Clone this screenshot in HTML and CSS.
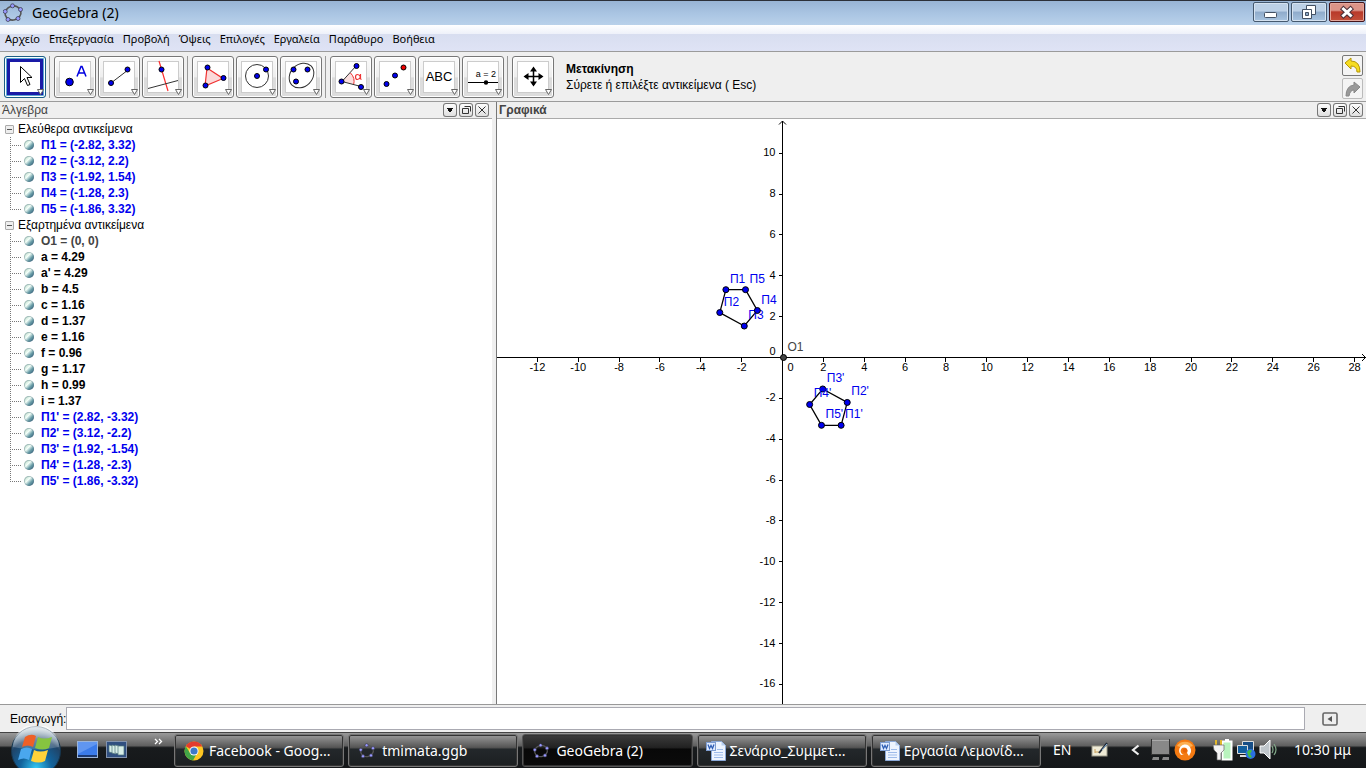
FILE: index.html
```html
<!DOCTYPE html>
<html lang="el">
<head>
<meta charset="utf-8">
<title>GeoGebra (2)</title>
<link rel="stylesheet" href="styles.css">
</head>
<body>
<svg class="defs" width="0" height="0" aria-hidden="true">
  <defs>
    <symbol id="ggb" viewBox="0 0 20 20">
      <ellipse cx="10" cy="10" rx="8" ry="7" fill="none" stroke="#555" stroke-width="1.6" transform="rotate(-15 10 10)"/>
      <g fill="#9999ff" stroke="#334" stroke-width=".7"><circle cx="9.500" cy="2.800" r="2"/><circle cx="17.500" cy="6.500" r="2"/><circle cx="15" cy="15.500" r="2"/><circle cx="5" cy="16.500" r="2"/><circle cx="2.200" cy="8.500" r="2"/></g>
    </symbol>
    <symbol id="down" viewBox="0 0 14 14"><path d="M4 5h6v1H9v2H8v1H6V8H5V6H4z" fill="#111"/></symbol>
    <symbol id="window" viewBox="0 0 14 14"><path d="M3.500 5.500h6v5h-6zM5.500 3.500h6v5" fill="none" stroke="#333"/></symbol>
    <symbol id="close" viewBox="0 0 14 14"><path d="M3.500 3.500l7 7M10.500 3.500l-7 7" stroke="#333"/></symbol>
    <symbol id="word" viewBox="0 0 22 22">
      <path d="M6.500 1.500h10l4 4v15h-14z" fill="#edf4ff" stroke="#8ba9d8"/><path d="M16.500 1.500v4h4" fill="#b8cff0"/><path d="M9 12.500h9M9 15h9M9 17.500h9M12 9.500h6" stroke="#9dbbea"/>
      <rect x="1.500" y="2.500" width="9" height="8" fill="#dfeaff" stroke="#7e9dd0"/><path d="M3 4.500l1.500 4L6 5.500l1.500 3L9 4.500" fill="none" stroke="#2f5fb5" stroke-width="1.300"/>
    </symbol>
  </defs>
</svg>
<div class="app">
  <header class="titlebar">
    <svg class="title-icon" width="20" height="20"><use href="#ggb"/></svg>
    <h1 class="title">GeoGebra (2)</h1>
    <div class="win-buttons">
      <button class="win" aria-label="Ελαχιστοποίηση"><svg width="34" height="18"><rect x="10.500" y="9.500" width="12" height="5" rx="1" fill="#fff" stroke="#435063"/></svg></button>
      <button class="win" aria-label="Επαναφορά"><svg width="34" height="18"><g fill="#fff" stroke="#435063"><path d="M14.500 2.500h9v9h-9z"/><path d="M10.500 6.500h9v9h-9z"/><path d="M13.500 9.500h3v3h-3z" fill="#8eaac8"/></g></svg></button>
      <button class="win win-close" aria-label="Κλείσιμο"><svg width="34" height="18"><path d="M13.500 6l7 6.500M20.500 6l-7 6.500" stroke="#4c3038" stroke-width="5" stroke-linecap="square"/><path d="M13.500 6l7 6.500M20.500 6l-7 6.500" stroke="#fff" stroke-width="3" stroke-linecap="square"/></svg></button>
    </div>
  </header>
  <nav class="menubar">
    <button>Αρχείο</button><button>Επεξεργασία</button><button>Προβολή</button><button>Όψεις</button><button>Επιλογές</button><button>Εργαλεία</button><button>Παράθυρο</button><button>Βοήθεια</button>
  </nav>
  <div class="toolbar">
    <div class="group">
      <button class="tool selected" aria-label="Μετακίνηση"><svg viewBox="0 0 40 40"><path d="M15.500 9.500v16l4-4 3 7 2.500-1-3-7h5z" fill="#fff" stroke="#000"/><path class="drop" d="M32.500 32.500h6l-3 5z"/></svg></button>
    </div>
    <div class="group">
      <button class="tool" aria-label="Νέο σημείο"><svg viewBox="0 0 40 40"><circle class="pt" cx="14.500" cy="25" r="3.800"/><path d="M22 19.500l4-10h1l4 10M23.500 16h6" fill="none" stroke="#0000e0" stroke-width="1.500"/><path class="drop" d="M32.500 32.500h6l-3 5z"/></svg></button>
      <button class="tool" aria-label="Ευθεία"><svg viewBox="0 0 40 40"><path class="ln" d="M12 26l17-13"/><circle class="pt" cx="12" cy="26" r="2.500"/><circle class="pt" cx="28.500" cy="12.500" r="2.500"/><path class="drop" d="M32.500 32.500h6l-3 5z"/></svg></button>
      <button class="tool" aria-label="Κάθετη ευθεία"><svg viewBox="0 0 40 40"><path d="M16 4l9 30" stroke="#ff3030" stroke-width="1.200"/><path class="ln" d="M5 31.500l30-8"/><circle class="pt" cx="18.500" cy="12.500" r="2.500"/><path class="drop" d="M32.500 32.500h6l-3 5z"/></svg></button>
    </div>
    <div class="group">
      <button class="tool" aria-label="Πολύγωνο"><svg viewBox="0 0 40 40"><path d="M14 11l16 10.500L12 29z" fill="#fbdada" stroke="#f03030" stroke-width="1.200"/><circle class="pt" cx="14.500" cy="10.500" r="2.500"/><circle class="pt" cx="30.500" cy="21" r="2.500"/><circle class="pt" cx="12.500" cy="28.500" r="2.500"/><path class="drop" d="M32.500 32.500h6l-3 5z"/></svg></button>
      <button class="tool" aria-label="Κύκλος"><svg viewBox="0 0 40 40"><circle class="ln" cx="20" cy="19" r="11.500"/><circle class="pt" cx="20" cy="19" r="2.500"/><circle class="pt" cx="29" cy="12.500" r="2.500"/><path class="drop" d="M32.500 32.500h6l-3 5z"/></svg></button>
      <button class="tool" aria-label="Έλλειψη"><svg viewBox="0 0 40 40"><ellipse class="ln" cx="20.500" cy="18.500" rx="13.500" ry="11" transform="rotate(-45 20.500 18.500)"/><circle class="pt" cx="12.500" cy="12.500" r="2.500"/><circle class="pt" cx="26.500" cy="12.500" r="2.500"/><circle class="pt" cx="15" cy="24.500" r="2.500"/><path class="drop" d="M32.500 32.500h6l-3 5z"/></svg></button>
    </div>
    <div class="group">
      <button class="tool" aria-label="Γωνία"><svg viewBox="0 0 40 40"><path d="M11 24.500l8.500-9a12 12 0 0 1 3 12z" fill="#fbdede"/><path d="M19.500 16a12 12 0 0 1 3 12" fill="none" stroke="#e33"/><path class="ln" d="M25 9L11 24.500l19 5"/><path d="M29.500 17v4q0 1.500 1 1.500M29.500 20q-1 2.500-3 2.500t-2-2.500 2-2.500 3 2.500" fill="none" stroke="#e33" stroke-width="1.200"/><circle class="pt" cx="25.500" cy="9" r="2.500"/><circle class="pt" cx="10.500" cy="24.500" r="2.500"/><circle class="pt" cx="30" cy="30" r="2.500"/><path class="drop" d="M32.500 32.500h6l-3 5z"/></svg></button>
      <button class="tool" aria-label="Ανάκλαση"><svg viewBox="0 0 40 40"><circle class="pt" cx="11.500" cy="27" r="2.500"/><circle class="pt" cx="20" cy="18.500" r="2.500"/><circle class="pt red" cx="28.500" cy="10.500" r="2.500"/><path class="drop" d="M32.500 32.500h6l-3 5z"/></svg></button>
      <button class="tool" aria-label="Εισαγωγή κειμένου"><svg viewBox="0 0 40 40"><text x="20" y="24" text-anchor="middle" font-size="13">ABC</text><path class="drop" d="M32.500 32.500h6l-3 5z"/></svg></button>
      <button class="tool" aria-label="Δρομέας"><svg viewBox="0 0 40 40"><text x="23" y="20" text-anchor="middle" font-size="9">a = 2</text><path d="M5 25.500h30" stroke="#000"/><circle cx="23" cy="25.500" r="2.200"/><path class="drop" d="M32.500 32.500h6l-3 5z"/></svg></button>
    </div>
    <div class="group">
      <button class="tool" aria-label="Μετακίνηση γραφικών"><svg viewBox="0 0 40 40"><path d="M20.500 12v16M12 19.500h17" stroke="#000" stroke-width="1.500"/><path d="M20.500 9.500l3.500 5h-7zM20.500 29.500l3.500-5h-7zM10.500 19.500l5-3.500v7zM30.500 19.500l-5-3.500v7z"/><path class="drop" d="M32.500 32.500h6l-3 5z"/></svg></button>
    </div>
    <div class="hint"><strong>Μετακίνηση</strong><span>Σύρετε ή επιλέξτε αντικείμενα ( Esc)</span></div>
    <div class="history">
      <button aria-label="Αναίρεση"><svg width="19" height="19"><path d="M2 7l6-5v3q9 0 9 11h-3q0-6-6-6v3z" fill="#f6dc20" stroke="#b59605"/></svg></button>
      <button disabled aria-label="Ακύρωση αναίρεσης"><svg width="19" height="19"><path d="M17 8l-6-5v3q-8 1-8 11h3q1-6 5-6v3z" fill="#999" stroke="#888"/></svg></button>
    </div>
  </div>
  <main class="views">
    <section class="view algebra">
      <div class="view-head"><h2>Άλγεβρα</h2><div class="view-buttons"><button aria-label="Μενού"><svg width="14" height="14"><use href="#down"/></svg></button><button aria-label="Νέο παράθυρο"><svg width="14" height="14"><use href="#window"/></svg></button><button aria-label="Κλείσιμο άλγεβρας"><svg width="14" height="14"><use href="#close"/></svg></button></div></div>
      <div class="tree">
        <div class="branch"><button class="fold" aria-label="Σύμπτυξη"></button>Ελεύθερα αντικείμενα</div>
        <ul class="leaves">
          <li class="blue">Π1 = (-2.82, 3.32)</li><li class="blue">Π2 = (-3.12, 2.2)</li><li class="blue">Π3 = (-1.92, 1.54)</li><li class="blue">Π4 = (-1.28, 2.3)</li><li class="blue">Π5 = (-1.86, 3.32)</li>
        </ul>
        <div class="branch"><button class="fold" aria-label="Σύμπτυξη"></button>Εξαρτημένα αντικείμενα</div>
        <ul class="leaves">
          <li class="gray">Ο1 = (0, 0)</li><li>a = 4.29</li><li>a' = 4.29</li><li>b = 4.5</li><li>c = 1.16</li><li>d = 1.37</li><li>e = 1.16</li><li>f = 0.96</li><li>g = 1.17</li><li>h = 0.99</li><li>i = 1.37</li>
          <li class="blue">Π1' = (2.82, -3.32)</li><li class="blue">Π2' = (3.12, -2.2)</li><li class="blue">Π3' = (1.92, -1.54)</li><li class="blue">Π4' = (1.28, -2.3)</li><li class="blue">Π5' = (1.86, -3.32)</li>
        </ul>
      </div>
    </section>
    <section class="view graphics">
      <div class="view-head"><h2 class="strong">Γραφικά</h2><div class="view-buttons"><button aria-label="Μενού"><svg width="14" height="14"><use href="#down"/></svg></button><button aria-label="Νέο παράθυρο"><svg width="14" height="14"><use href="#window"/></svg></button><button aria-label="Κλείσιμο γραφικών"><svg width="14" height="14"><use href="#close"/></svg></button></div></div>
      <div class="canvas"><svg id="plot" class="plot"></svg></div>
    </section>
  </main>
  <form class="inputbar">
    <label for="cmd">Εισαγωγή:</label><input id="cmd" type="text" autocomplete="off">
    <button type="button" class="help" aria-label="Βοήθεια εισαγωγής"><svg width="16" height="14"><rect x="1" y="1" width="14" height="12" rx="1.500" fill="#eee" stroke="#666" stroke-width="1.600"/><path d="M10 4v6L5.500 7z" fill="#555"/></svg></button>
  </form>
  <footer class="taskbar">
    <button class="start" aria-label="Έναρξη"><svg width="52" height="42" viewBox="0 0 52 42">
      <defs><radialGradient id="orb" cx=".5" cy=".85" r=".8"><stop offset="0" stop-color="#35c9f5"/><stop offset=".4" stop-color="#12639c"/><stop offset=".75" stop-color="#204468"/><stop offset="1" stop-color="#9fb5c4"/></radialGradient>
      <linearGradient id="shine" x2="0" y2="1"><stop offset="0" stop-color="#fff" stop-opacity=".75"/><stop offset="1" stop-color="#fff" stop-opacity=".15"/></linearGradient></defs>
      <circle cx="26" cy="25" r="24.500" fill="url(#orb)" stroke="#163750"/><path d="M3 21A23 23 0 0 1 49 21Q26 26 3 21z" fill="url(#shine)"/>
      <path d="M15 11q6-4 11-1l-3 11q-5-3-11 0z" fill="#ee6027"/><path d="M28 11q6 3 14 0l-3 11q-6 3-14 0z" fill="#86c440"/><path d="M11 23q6-3 11 0l-3 11q-5-3-11 0z" fill="#4aa7ee"/><path d="M24 24q6 3 14 0l-3 11q-6 3-14 0z" fill="#ffd23a"/></svg></button>
    <div class="quick">
      <button aria-label="Επιφάνεια εργασίας"><svg width="21" height="17"><rect x=".5" y=".5" width="20" height="16" fill="#3b7bea" stroke="#9bb4d8"/><path d="M1 13L20 3V1H1z" fill="#79a9f5" opacity=".6"/><path d="M1 14h19v2H1z" fill="#1b3973"/></svg></button>
      <button aria-label="Εναλλαγή παραθύρων"><svg width="21" height="17"><rect x=".5" y=".5" width="20" height="16" fill="#304f80" stroke="#8393ad"/><g fill="#d8eee8" stroke="#52777c" stroke-width=".7"><path d="M3 4l4 1v7l-4-1z"/><path d="M6 4l4 1v8l-4-1z"/><path d="M9 4l4 1v8l-4-1z"/><path d="M12 5h6v9h-6z"/></g></svg></button>
    </div>
    <button class="more" aria-label="Περισσότερα"><svg width="9" height="7"><path d="M1 1l2.500 2.500L1 6M5 1l2.500 2.500L5 6" fill="none" stroke="#fff" stroke-width="1.300"/></svg></button>
    <div class="tasks">
      <button class="task"><svg width="20" height="20" viewBox="0 0 20 20"><circle cx="10" cy="10" r="9.500" fill="#fdc622"/><path d="M10 10L1.800 5.200A9.500 9.500 0 0 1 18.300 5.500H10z" fill="#e33b2e"/><path d="M1.800 5.200A9.500 9.500 0 0 0 9 19.500l4-7.200L10 10 6 12z" fill="#42a647"/><circle cx="10" cy="10" r="4.500" fill="#fff"/><circle cx="10" cy="10" r="3.600" fill="#3c79c9"/></svg><span>Facebook - Goog...</span></button>
      <button class="task ggb"><svg width="16" height="16"><use href="#ggb"/></svg><span>tmimata.ggb</span></button>
      <button class="task ggb active"><svg width="16" height="16"><use href="#ggb"/></svg><span>GeoGebra (2)</span></button>
      <button class="task doc"><svg width="22" height="22"><use href="#word"/></svg><span>Σενάριο_Συμμετ...</span></button>
      <button class="task doc"><svg width="22" height="22"><use href="#word"/></svg><span>Εργασία Λεμονίδ...</span></button>
    </div>
    <div class="tray">
      <span class="lang">EN</span>
      <svg class="pen" width="18" height="16"><rect x="1" y="4" width="15" height="10" fill="#efebd6" stroke="#9c9a8a"/><path d="M4 7v4M4 10h4" stroke="#c8a05c"/><path d="M8 11l8-10" stroke="#202a38" stroke-width="2"/><path d="M11 8l5-6" stroke="#8bb7df"/></svg>
      <svg class="chevron" width="10" height="12"><path d="M8.500 1.500L3 6l5.500 4.500" fill="none" stroke="#eee" stroke-width="2.200"/></svg>
      <svg class="net-off" width="20" height="22"><rect x=".5" y=".5" width="18" height="15" fill="#888" stroke="#333"/><path d="M1 1h17" stroke="#ccc"/><path d="M2 18h6v3H1zM12 18h6v3h-7z" fill="#888"/></svg>
      <svg class="avast" width="22" height="22"><circle cx="11" cy="11" r="10.500" fill="#f47a12"/><path d="M3 7a9 8 0 0 1 16 0q-8 3-16 0z" fill="#ffc66e" opacity=".7"/><path d="M7 16a6 6 0 1 1 9-1l-1 2-2-3a3.500 3.500 0 1 0-3 1.500z" fill="#fff"/><circle cx="11" cy="11.500" r="2.200" fill="#e96508"/></svg>
      <svg class="power" width="20" height="22"><rect x="9.500" y="2.500" width="9" height="18" fill="#b8f3bd" stroke="#fff" stroke-width="2"/><path d="M12 0h4v2h-4z" fill="#fff"/><path d="M3 1v5M8 1v5" stroke="#e3b92c" stroke-width="2"/><path d="M0 6h11v5l-3 3v7H4v-7l-3-3z" fill="#f4f4f4" stroke="#666" stroke-width=".7"/></svg>
      <svg class="network" width="20" height="20"><g stroke="#ddd"><path d="M6.500 1.500h11v9h-11z" fill="#174e87"/><path d="M1.500 5.500h10v8h-10z" fill="#135f9e"/></g><path d="M4 16h7" stroke="#ddd" stroke-width="2"/><circle cx="14.500" cy="14" r="5" fill="#2b6fe0"/><path d="M11 12q3-4 5-1l-2 3 2 3q-3 2-4-2z" fill="#42bd4a"/></svg>
      <svg class="volume" width="19" height="20"><path d="M1 6h4l6-6v19l-6-6H1z" fill="#bfc6cb" stroke="#fff"/><path d="M13 6q2 4 0 7M15 4q4 6 0 11" fill="none" stroke="#83a98a" stroke-width="1.200"/></svg>
      <time>10:30 μμ</time>
    </div>
  </footer>
</div>
<script src="plot.js"></script>
</body>
</html>
```
FILE: styles.css
```css
* { box-sizing: border-box; }
body { margin: 0; font-family: "Liberation Sans", sans-serif; font-size: 12px; color: #000; background: #efefef; }
button { font: inherit; color: inherit; padding: 0; margin: 0; border: 0; background: none; }
svg { display: block; }
.defs { position: absolute; }
.app { display: flex; flex-direction: column; height: 100vh; overflow: hidden; }

.titlebar { display: flex; align-items: center; flex: none; height: 25px; padding-left: 3px; border-top: 1px solid #2c3038; background: linear-gradient(#98b4d4, #a9c4e2 50%, #b9d1ea); }
.title { flex: 1; margin: 0 0 0 9px; font: 14px/24px "Noto Sans", sans-serif; }
.win-buttons { display: flex; gap: 2px; align-self: flex-start; padding: 1px 1px 0 0; }
.win { display: grid; place-items: center; width: 36px; height: 20px; border: 1px solid #45596f; border-radius: 2px; background: linear-gradient(#bcd0e6 45%, #8fabcb 50%, #a8c4e0); box-shadow: inset 0 0 0 1px #d5e2f0; }
.win-close { border-color: #43141a; background: linear-gradient(#dc9488 40%, #b8392a 50%, #c4503a); box-shadow: inset 0 0 0 1px #e3a79c; }

.menubar { display: flex; flex: none; align-items: center; gap: 9px; height: 27px; padding: 0 5px; border-bottom: 1px solid #9b9b9b; background: linear-gradient(#fff, #eef1fa 34%, #d8def0 36%, #dfe3f5); font-family: "Noto Sans", sans-serif; font-size: 11px; }

.toolbar { display: flex; flex: none; align-items: center; height: 50px; padding: 0 3px 0 4px; border-bottom: 1px solid #9b9b9b; }
.group { display: flex; gap: 2px; padding-right: 3px; margin-right: 4px; border-right: 1px solid #999; }
.group:nth-child(5) { border: 0; }
.tool { width: 42px; height: 42px; border: 1px solid #777; border-radius: 3px; background: linear-gradient(#fafafa, #eee 50%, #dcdcdc 52%, #ddd); box-shadow: inset 0 0 0 1px #fff; }
.tool svg { width: 40px; height: 40px; background: linear-gradient(#fff, #fff) 50% 50% / 30px 30px no-repeat, linear-gradient(#ccc, #ccc) 50% 50% / 32px 32px no-repeat; }
.tool.selected { border-color: #1d5f85; background: #5aa5d2; }
.tool.selected svg { background: linear-gradient(#fff, #fff) 50% 50% / 30px 30px no-repeat, linear-gradient(#1a1aa6, #1a1aa6) 50% 50% / 36px 36px no-repeat; }
.pt { fill: #00e; stroke: #000; stroke-width: 1; }
.red { fill: #e00; }
.ln { fill: none; stroke: #333; stroke-width: 1; }
.drop { fill: #fff; stroke: #666; stroke-width: 1; }
.hint { display: flex; flex: 1; flex-direction: column; padding-left: 5px; line-height: 16px; }
.hint strong { font-size: 12px; }
.history { display: flex; flex-direction: column; gap: 2px; }
.history button { width: 21px; height: 21px; border: 1px solid #777; border-radius: 2px; background: #f4f4f4; }
.history button:disabled { border-color: #bbb; }

.views { display: flex; flex: 1; min-height: 0; }
.view { display: flex; flex-direction: column; min-width: 0; background: #fff; }
.algebra { flex: 0 0 496px; border-right: 4px solid #efefef; }
.graphics { flex: 1; border-left: 1px solid #777; }
.view-head { display: flex; flex: none; justify-content: space-between; align-items: center; height: 17px; padding: 0 3px 0 2px; border-bottom: 1px solid #aaa; background: #efefef; }
.view-head h2 { margin: 0; font-size: 12px; line-height: 16px; font-weight: normal; color: #444; }
.view-head .strong { font-weight: bold; }
.view-buttons { display: flex; gap: 2px; }
.view-buttons button { width: 14px; height: 14px; border-radius: 3px; background: linear-gradient(#fff, #ddd); box-shadow: inset 0 0 0 1px #777; }
.tree { padding-top: 2px; line-height: 16px; }
.branch { display: flex; align-items: center; gap: 4px; height: 16px; padding-left: 5px; }
.fold { width: 9px; height: 9px; border: 1px solid #aaa; border-radius: 1px; background: linear-gradient(#555, #555) 50% 50% / 5px 1px no-repeat, #eee; }
.leaves { margin: 0; padding: 0; list-style: none; font-weight: bold; }
.leaves li { position: relative; height: 16px; padding-left: 41px; background: repeating-linear-gradient(#777 0 1px, transparent 1px 2px) 10px 0 / 1px 16px no-repeat; }
.leaves li:last-child { background-size: 1px 9px; }
.leaves li::before { content: ""; position: absolute; left: 12px; top: 8px; width: 10px; height: 1px; background: repeating-linear-gradient(90deg, #777 0 1px, transparent 1px 2px); }
.leaves li::after { content: ""; position: absolute; left: 24px; top: 3px; width: 10px; height: 10px; border-radius: 50%; background: linear-gradient(135deg, #a9cdbc, #f3fff8 40%, #6b9ea8 65%, #234e72); box-shadow: inset 0 0 0 1px #4f748066; }
.blue { color: #00e; }
.gray { color: #444; }
.canvas { flex: 1; min-height: 0; overflow: hidden; }
.plot { width: 100%; height: 100%; }
.axis { fill: none; stroke: #000; shape-rendering: crispEdges; }
.arrow { fill: none; stroke: #000; }
.tick-label { font-size: 11px; }
.side { fill: none; stroke: #000; stroke-width: 1.3px; }
.name { font-size: 12px; fill: #00e; }
.origin { fill: #444; }

.inputbar { display: flex; flex: none; align-items: center; height: 28px; padding-left: 10px; border-top: 1px solid #999; }
.inputbar input { flex: 1; height: 23px; border: 1px solid #aaaab2; background: #fff; font: inherit; }
.help { display: grid; place-items: center; width: 50px; margin-right: 11px; }

.taskbar { position: relative; display: flex; flex: none; align-items: flex-start; height: 36px; border-top: 1px solid #444; background: linear-gradient(#999, #606060 36%, #181b1d 42%, #151719); color: #fff; font-family: "Noto Sans", sans-serif; font-size: 14px; }
.start { position: absolute; left: 10px; bottom: 0; }
.quick { display: flex; gap: 8px; padding: 8px 0 0 77px; }
.more { margin: 5px 0 0 27px; }
.tasks { display: grid; grid-template-columns: repeat(5, minmax(0, 1fr)); flex: 0 1 867px; gap: 4px; margin-left: 11px; padding-top: 1px; min-width: 0; }
.task { display: flex; align-items: center; gap: 5px; min-width: 0; height: 33px; padding-left: 9px; border: 1px solid #777; border-radius: 3px; background: linear-gradient(#999, #555 40%, #23282b 46%, #1c1f21); box-shadow: inset 0 0 0 1px #333; white-space: nowrap; }
.task svg { flex: none; }
.ggb { padding-left: 10px; gap: 7px; }
.doc { padding-left: 7px; gap: 3px; }
.active { border-color: #555; background: linear-gradient(#3c3c3c, #222 40%, #080808 46%, #0b0b0b); }
.tray { display: flex; flex: 1; align-items: center; gap: 3px; height: 33px; padding: 0 15px 0 12px; white-space: nowrap; }
.tray svg { flex: none; }
.pen { margin-left: 17px; }
.chevron { margin: 0 8px 0 18px; }
.power { margin-left: 14px; }
.tray time { margin-left: auto; }
```
FILE: plot.js
```js
const plot = document.getElementById("plot");
const OX = 285.5, OY = 238.5, UNIT = 20.43;

function add(tag, attrs, text) {
  const node = document.createElementNS("http://www.w3.org/2000/svg", tag);
  for (const key in attrs) node.setAttribute(key, attrs[key]);
  if (text !== undefined) node.textContent = text;
  plot.appendChild(node);
}
const px = x => OX + x * UNIT;
const py = y => OY - y * UNIT;

function draw() {
  plot.replaceChildren();
  const w = plot.clientWidth, h = plot.clientHeight;
  let axes = `M0 ${OY}H${w}M${OX} 2V${h}`;
  for (let n = -12; px(n) < w; n += 2) {
    if (n) axes += `M${px(n)} ${OY}v4`;
    add("text", { class: "tick-label", x: n ? px(n) : OX + 8, y: OY + 13, "text-anchor": "middle" }, n);
  }
  for (let n = 10; py(n) < h; n -= 2) {
    if (n) axes += `M${OX} ${py(n)}h-4`;
    add("text", { class: "tick-label", x: OX - 7, y: n ? py(n) + 3 : OY - 3, "text-anchor": "end" }, n);
  }
  add("path", { class: "axis", d: axes });
  add("path", { class: "arrow", d: `M${OX - 3.5} 5.500L${OX} 2l3.500 3.500M${w - 4} ${OY - 3.5}l3.500 3.500-3.500 3.500` });

  const pentagon = [["Π1", -2.82, 3.32], ["Π2", -3.12, 2.2], ["Π3", -1.92, 1.54], ["Π4", -1.28, 2.3], ["Π5", -1.86, 3.32]];
  const image = pentagon.map(([name, x, y]) => [name + "'", -x, -y]);
  const cx = x => px(x) + 1;
  for (const shape of [pentagon, image]) {
    add("polygon", { class: "side", points: shape.map(p => `${cx(p[1])},${py(p[2])}`).join(" ") });
    for (const [name, x, y] of shape) {
      add("circle", { class: "pt", cx: cx(x), cy: py(y), r: 3 });
      add("text", { class: "name", x: cx(x) + 4, y: py(y) - 7 }, name);
    }
  }
  add("circle", { class: "pt origin", cx: cx(0), cy: OY, r: 3 });
  add("text", { class: "name origin", x: cx(0) + 4, y: OY - 7 }, "Ο1");
}
draw();
addEventListener("resize", draw);
```
